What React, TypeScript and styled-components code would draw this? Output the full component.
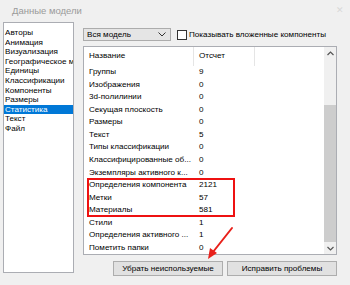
import styled, { createGlobalStyle } from 'styled-components'

const GlobalStyle = createGlobalStyle`
  html, body {
    margin: 0;
    padding: 0;
    background: #f0f0f0;
  }
  body {
    font-family: "Liberation Sans", Arial, sans-serif;
    font-size: 8.1px;
    color: #000;
  }
`

const sections = [
  'Авторы',
  'Анимация',
  'Визуализация',
  'Географическое местоположение',
  'Единицы',
  'Классификации',
  'Компоненты',
  'Размеры',
  'Статистика',
  'Текст',
  'Файл',
]

type Stat = { name: string; value: string }

const before: Stat[] = [
  { name: 'Группы', value: '9' },
  { name: 'Изображения', value: '0' },
  { name: '3d-полилинии', value: '0' },
  { name: 'Секущая плоскость', value: '0' },
  { name: 'Размеры', value: '0' },
  { name: 'Текст', value: '5' },
  { name: 'Типы классификации', value: '0' },
  { name: 'Классифицированные об...', value: '0' },
  { name: 'Экземпляры активного к...', value: '0' },
]

const marked: Stat[] = [
  { name: 'Определения компонента', value: '2121' },
  { name: 'Метки', value: '57' },
  { name: 'Материалы', value: '581' },
]

const after: Stat[] = [
  { name: 'Стили', value: '1' },
  { name: 'Определения активного ...', value: '1' },
  { name: 'Пометить папки', value: '0' },
]

const StatRows = ({ items }: { items: Stat[] }) => (
  <>
    {items.map(item => (
      <Row key={item.name}>
        <Cell>{item.name}</Cell>
        <Cell>{item.value}</Cell>
      </Row>
    ))}
  </>
)

export default function App() {
  return (
    <Window>
      <GlobalStyle />
      <TitleBar>
        <span>Данные модели</span>
        <Close>✕</Close>
      </TitleBar>
      <Body>
        <SectionList>
          {sections.map(s => (
            <SectionItem key={s} $active={s === 'Статистика'}>{s}</SectionItem>
          ))}
        </SectionList>

        <Pane>
          <Toolbar>
            <Select>
              <span>Вся модель</span>
              <svg width="8" height="5" viewBox="0 0 8 5">
                <path d="M0.5 0.5 L4 4 L7.5 0.5" fill="none" stroke="#333" strokeWidth="1" />
              </svg>
            </Select>
            <CheckLabel>
              <CheckBox />
              Показывать вложенные компоненты
            </CheckLabel>
          </Toolbar>

          <Table>
            <TableContent>
              <Header>
                <HeaderCell>Название</HeaderCell>
                <HeaderCell>Отсчет</HeaderCell>
              </Header>
              <StatRows items={before} />
              <Marked>
                <StatRows items={marked} />
              </Marked>
              <StatRows items={after} />
            </TableContent>
            <ScrollBar>
              <ScrollArrow>
                <svg width="7" height="5" viewBox="0 0 7 5">
                  <path d="M0.5 4 L3.5 1 L6.5 4" fill="none" stroke="#555" strokeWidth="1.2" />
                </svg>
              </ScrollArrow>
              <Track>
                <Thumb />
              </Track>
              <ScrollArrow>
                <svg width="7" height="5" viewBox="0 0 7 5">
                  <path d="M0.5 1 L3.5 4 L6.5 1" fill="none" stroke="#555" strokeWidth="1.2" />
                </svg>
              </ScrollArrow>
            </ScrollBar>
          </Table>

          <Actions>
            <Button>Убрать неиспользуемые</Button>
            <Button>Исправить проблемы</Button>
          </Actions>
        </Pane>
      </Body>

      <Arrow width="30" height="36" viewBox="0 0 30 36">
        <line x1="27" y1="2" x2="8" y2="26" stroke="#e8201a" strokeWidth="2" strokeLinecap="round" />
        <polygon points="3,33 5,22 12,27" fill="#e8201a" />
      </Arrow>
    </Window>
  )
}

const Window = styled.div`
  position: relative;
  width: 350px;
  height: 285px;
  background: #f0f0f0;
  overflow: hidden;
`

const TitleBar = styled.div`
  height: 22px;
  padding: 0 6px 2px 12px;
  display: flex;
  align-items: center;
  justify-content: space-between;
  font-size: 9.5px;
  color: #9a9a9a;
  box-sizing: border-box;
`

const Close = styled.span`
  font-size: 9px;
  color: #d8d8d8;
`

const Body = styled.div`
  display: flex;
  align-items: flex-start;
  gap: 9px;
  padding-left: 3px;
`

const SectionList = styled.div`
  box-sizing: border-box;
  width: 71px;
  height: 251px;
  padding-top: 5px;
  background: #fff;
  border: 1px solid #abadb3;
  overflow: hidden;
`

const SectionItem = styled.div<{ $active?: boolean }>`
  height: 9.6px;
  line-height: 9.6px;
  padding-left: 1px;
  white-space: nowrap;
  overflow: hidden;
  background: ${p => (p.$active ? '#0078d7' : 'transparent')};
  color: ${p => (p.$active ? '#fff' : '#000')};
`

const Pane = styled.div`
  width: 254px;
  margin-top: 6px;
  display: flex;
  flex-direction: column;
`

const Toolbar = styled.div`
  display: flex;
  align-items: center;
  gap: 6px;
  height: 13px;
`

const Select = styled.div`
  box-sizing: border-box;
  width: 88px;
  height: 13px;
  padding: 0 4px 0 3px;
  display: flex;
  align-items: center;
  justify-content: space-between;
  background: #e5e5e5;
  border: 1px solid #acacac;
`

const CheckLabel = styled.label`
  display: flex;
  align-items: center;
  gap: 2px;
  white-space: nowrap;
`

const CheckBox = styled.span`
  box-sizing: border-box;
  width: 10px;
  height: 10px;
  background: #fff;
  border: 1px solid #333;
`

const Table = styled.div`
  box-sizing: border-box;
  margin-top: 5px;
  height: 209px;
  display: flex;
  background: #fff;
  border: 1px solid #abadb3;
`

const TableContent = styled.div`
  flex: 1;
`

const Header = styled.div`
  display: grid;
  grid-template-columns: 110px 61px;
  height: 19px;
`

const HeaderCell = styled.div`
  padding-left: 5px;
  line-height: 18px;
  border-right: 1px solid #e5e5e5;
`

const Row = styled.div`
  display: grid;
  grid-template-columns: 110px 61px;
  height: 12.57px;
  line-height: 12.57px;
`

const Cell = styled.div`
  padding-left: 5px;
  white-space: nowrap;
  overflow: hidden;
`

const Marked = styled.div`
  position: relative;

  &::after {
    content: '';
    position: absolute;
    left: 3px;
    top: -1px;
    bottom: 0;
    width: 148px;
    border: 2px solid #ee1111;
    box-sizing: border-box;
  }
`

const ScrollBar = styled.div`
  width: 12px;
  display: flex;
  flex-direction: column;
  background: #f0f0f0;
`

const ScrollArrow = styled.div`
  height: 12px;
  display: grid;
  place-items: center;
`

const Track = styled.div`
  flex: 1;
  padding-top: 46px;
  box-sizing: border-box;
`

const Thumb = styled.div`
  height: 137px;
  background: #cdcdcd;
`

const Actions = styled.div`
  display: flex;
  justify-content: flex-end;
  gap: 4px;
  margin-top: 6px;
`

const Button = styled.div`
  box-sizing: border-box;
  width: 110px;
  height: 15px;
  display: grid;
  place-items: center;
  background: #e1e1e1;
  border: 1px solid #adadad;
`

const Arrow = styled.svg`
  position: absolute;
  left: 205px;
  top: 226px;
`
